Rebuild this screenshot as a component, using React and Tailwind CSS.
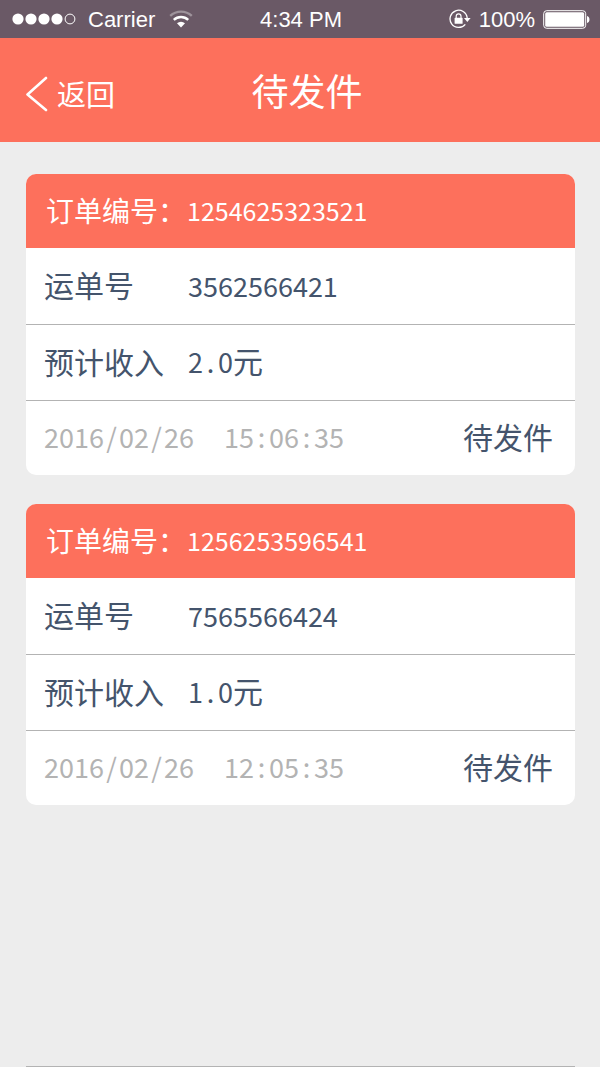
import React from 'react';

const orders = [
  { orderNo: '1254625323521', waybillNo: '3562566421', income: '2.0', date: '2016/02/26', time: '15:06:35', status: '待发件' },
  { orderNo: '1256253596541', waybillNo: '7565566424', income: '1.0', date: '2016/02/26', time: '12:05:35', status: '待发件' },
];

const SignalDots = () => (
  <svg width="64" height="12" viewBox="0 0 64 12" aria-hidden="true">
    {[6, 19, 32, 45].map(cx => (
      <circle key={cx} cx={cx} cy="6" r="5.6" fill="#fff" />
    ))}
    <circle cx="58" cy="6" r="4.9" fill="none" stroke="#fff" strokeWidth="1" />
  </svg>
);

const WifiIcon = () => (
  <svg width="24" height="18" viewBox="0 0 24 18" fill="none" stroke="#fff" aria-hidden="true">
    <path d="M1.2 5.8a16 16 0 0 1 21.6 0" strokeWidth="2.4" opacity="0.35" />
    <path d="M4.8 9.8a10.5 10.5 0 0 1 14.4 0" strokeWidth="2.4" />
    <path d="M12 17.4l-4-4.2a6 6 0 0 1 8 0z" fill="#fff" stroke="none" />
  </svg>
);

const RotationLockIcon = () => (
  <svg width="22" height="20" viewBox="0 0 22 20" fill="none" stroke="#fff" aria-hidden="true">
    <path d="M18.2 9A8.6 8.6 0 1 0 16.3 15.3" strokeWidth="1.3" />
    <path d="M15 9h6.6l-3.3 4z" fill="#fff" stroke="none" />
    <rect x="5.6" y="8.8" width="8" height="6" rx="0.6" fill="#fff" stroke="none" />
    <path d="M7.2 9V7.2a2.4 2.4 0 0 1 4.8 0V9" strokeWidth="1.2" />
  </svg>
);

const BatteryIcon = () => (
  <svg width="47" height="19" viewBox="0 0 47 19" aria-hidden="true">
    <rect x="0.7" y="0.7" width="42" height="17.6" rx="3" fill="none" stroke="#fff" strokeWidth="1" />
    <rect x="2.2" y="2.2" width="39" height="14.6" rx="1.5" fill="#fff" />
    <path d="M44 6c3.3 0.6 3.3 6.4 0 7z" fill="#fff" />
  </svg>
);

const StatusBar = () => (
  <div className="grid h-[38px] grid-cols-[1fr_auto_1fr] items-center bg-[#6a5966] pr-[10px] pl-3 font-['Liberation_Sans',Arial,sans-serif] text-[22px] leading-6 text-white">
    <div className="flex items-center">
      <SignalDots />
      <span className="ml-3 pt-0.5">Carrier</span>
      <span className="ml-[14px]"><WifiIcon /></span>
    </div>
    <span className="pt-0.5">4:34 PM</span>
    <div className="flex items-center justify-end">
      <RotationLockIcon />
      <span className="mx-2 pt-0.5">100%</span>
      <BatteryIcon />
    </div>
  </div>
);

const NavBar = () => (
  <header className="grid h-[104px] grid-cols-[1fr_auto_1fr] items-center bg-[#fd705c] pr-3 pl-[26px] text-white">
    <button type="button" className="flex items-center gap-2 pt-2 text-[29px] leading-9">
      <svg width="23" height="36" viewBox="0 0 23 36" fill="none" stroke="#fff" strokeWidth="2.6" strokeLinecap="round" strokeLinejoin="round" aria-hidden="true">
        <path d="M20 2L1.5 18.5L20 34" />
      </svg>
      <span className="pb-0.5">返回</span>
    </button>
    <h1 className="text-[37px] leading-[44px]">待发件</h1>
  </header>
);

const Digits = ({ text }) =>
  text.split(/([/:.])/).map((part, i) =>
    /^[/:.]$/.test(part) ? (
      <span key={i} className="inline-block w-[15px] text-center">{part}</span>
    ) : (
      part
    )
  );

const OrderCard = ({ order }) => (
  <article className="overflow-hidden rounded-[10px] bg-white text-[#44546c]">
    <h2 className="flex h-[74px] items-center bg-[#fd705c] pb-0.5 pl-5 text-white">
      <span className="w-[141px] text-[28px] whitespace-nowrap">订单编号：</span>
      <span className="text-[25px]">{order.orderNo}</span>
    </h2>
    <dl>
      <div className="flex h-[76px] items-center pl-[18px]">
        <dt className="w-36 pb-1 text-[30px]">运单号</dt>
        <dd className="text-[27px]">{order.waybillNo}</dd>
      </div>
      <div className="flex h-[76px] items-center border-t border-[#b3b3b3] pb-1 pl-[18px]">
        <dt className="w-36 text-[30px]">预计收入</dt>
        <dd className="text-[27px]"><Digits text={order.income} /><span className="text-[30px]">元</span></dd>
      </div>
    </dl>
    <div className="flex h-[75px] items-center justify-between border-t border-[#b3b3b3] pr-[22px] pl-[18px]">
      <time className="flex gap-[30px] pb-0.5 text-[27px] text-[#b3b3b3]">
        <span><Digits text={order.date} /></span>
        <span><Digits text={order.time} /></span>
      </time>
      <span className="pb-1 text-[30px]">{order.status}</span>
    </div>
  </article>
);

const App = () => (
  <div className="flex min-h-screen flex-col bg-[#ededed] font-['Noto_Sans_CJK_SC',sans-serif] leading-10">
    <StatusBar />
    <NavBar />
    <main className="flex flex-1 flex-col gap-[29px] pt-8 pr-[25px] pl-[26px]">
      {orders.map(order => (
        <OrderCard key={order.orderNo} order={order} />
      ))}
    </main>
    <hr className="mr-[25px] ml-[26px] border-[#b3b3b3]" />
  </div>
);

export default App;
